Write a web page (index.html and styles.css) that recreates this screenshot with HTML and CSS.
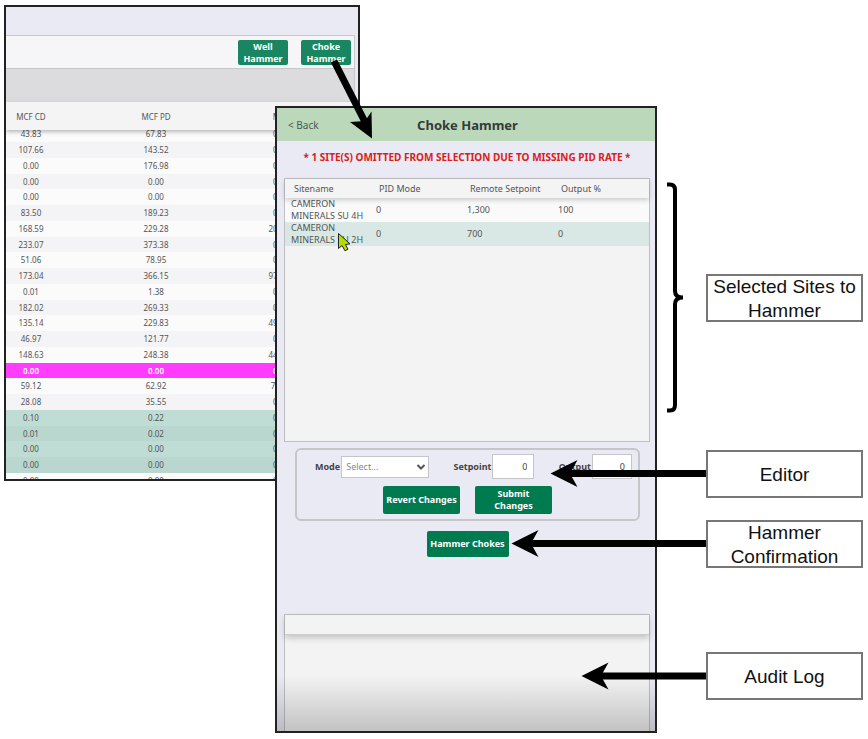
FILE: index.html
```html
<!DOCTYPE html>
<html lang="en">
<head>
<meta charset="utf-8">
<title>Choke Hammer</title>
<link rel="stylesheet" href="styles.css">
</head>
<body>
<main class="canvas">

  <section class="window wells">
    <div class="wells-top"></div>
    <div class="toolbar">
      <button type="button" class="btn btn-tool">Well Hammer</button>
      <button type="button" class="btn btn-tool">Choke Hammer</button>
    </div>
    <div class="band"></div>
    <table class="rates">
      <colgroup><col class="col-cd"><col class="col-pd"><col class="col-next"><col></colgroup>
      <thead><tr><th>MCF CD</th><th>MCF PD</th><th>MCF</th><th></th></tr></thead>
      <tbody>
        <tr><td>43.83</td><td>67.83</td><td>0.00</td><td></td></tr>
        <tr><td>107.66</td><td>143.52</td><td>0.00</td><td></td></tr>
        <tr><td>0.00</td><td>176.98</td><td>0.00</td><td></td></tr>
        <tr><td>0.00</td><td>0.00</td><td>0.00</td><td></td></tr>
        <tr><td>0.00</td><td>0.00</td><td>0.00</td><td></td></tr>
        <tr><td>83.50</td><td>189.23</td><td>0.00</td><td></td></tr>
        <tr><td>168.59</td><td>229.28</td><td>200.00</td><td></td></tr>
        <tr><td>233.07</td><td>373.38</td><td>0.00</td><td></td></tr>
        <tr><td>51.06</td><td>78.95</td><td>0.00</td><td></td></tr>
        <tr><td>173.04</td><td>366.15</td><td>970.00</td><td></td></tr>
        <tr><td>0.01</td><td>1.38</td><td>0.00</td><td></td></tr>
        <tr><td>182.02</td><td>269.33</td><td>0.00</td><td></td></tr>
        <tr><td>135.14</td><td>229.83</td><td>490.00</td><td></td></tr>
        <tr><td>46.97</td><td>121.77</td><td>0.00</td><td></td></tr>
        <tr><td>148.63</td><td>248.38</td><td>440.00</td><td></td></tr>
        <tr class="alarm"><td>0.00</td><td>0.00</td><td>0.00</td><td></td></tr>
        <tr><td>59.12</td><td>62.92</td><td>70.00</td><td></td></tr>
        <tr><td>28.08</td><td>35.55</td><td>0.00</td><td></td></tr>
        <tr class="picked"><td>0.10</td><td>0.22</td><td>0.00</td><td></td></tr>
        <tr class="picked"><td>0.01</td><td>0.02</td><td>0.00</td><td></td></tr>
        <tr class="picked"><td>0.00</td><td>0.00</td><td>0.00</td><td></td></tr>
        <tr class="picked"><td>0.00</td><td>0.00</td><td>0.00</td><td></td></tr>
        <tr><td>0.00</td><td>0.00</td><td>0.00</td><td></td></tr>
      </tbody>
    </table>
  </section>

  <section class="window hammer">
    <header class="titlebar">
      <button type="button" class="back">&lt; Back</button>
      <h1 class="title">Choke Hammer</h1>
    </header>
    <p class="warning">* 1 SITE(S) OMITTED FROM SELECTION DUE TO MISSING PID RATE *</p>

    <div class="panel sites-panel">
      <table class="sites">
        <colgroup><col class="col-site"><col class="col-mid"><col class="col-mid"><col></colgroup>
        <thead><tr><th>Sitename</th><th>PID Mode</th><th>Remote Setpoint</th><th>Output %</th></tr></thead>
        <tbody>
          <tr><td>CAMERON<br>MINERALS SU 4H</td><td>0</td><td>1,300</td><td>100</td></tr>
          <tr class="active"><td>CAMERON<br>MINERALS SU 2H</td><td>0</td><td>700</td><td>0</td></tr>
        </tbody>
      </table>
    </div>

    <form class="editor">
      <div class="fields">
        <div class="field">
          <label for="mode">Mode</label>
          <span class="select-wrap">
            <select id="mode"><option>Select...</option></select>
            <svg class="chevron" viewBox="0 0 10 6" aria-hidden="true"><path d="M1.500 1L5 4.500L8.500 1"/></svg>
          </span>
        </div>
        <div class="field">
          <label for="setpoint">Setpoint</label>
          <input id="setpoint" type="text" value="0">
        </div>
        <div class="field">
          <label for="output">Output</label>
          <input id="output" type="text" value="0">
        </div>
      </div>
      <div class="actions">
        <button type="button" class="btn btn-edit">Revert Changes</button>
        <button type="button" class="btn btn-edit">Submit<br>Changes</button>
      </div>
    </form>

    <button type="button" class="btn btn-hammer">Hammer Chokes</button>

    <div class="panel audit-panel"><div class="audit-head"></div></div>
  </section>

  <div class="callout callout-sites">Selected Sites to Hammer</div>
  <div class="callout callout-editor">Editor</div>
  <div class="callout callout-confirm">Hammer Confirmation</div>
  <div class="callout callout-audit">Audit Log</div>

  <svg class="marks" width="868" height="739" viewBox="0 0 868 739" aria-hidden="true">
    <g class="shaft">
      <path d="M334 61L366 124"/>
      <path d="M706 473.5H566"/>
      <path d="M706 543.5H527"/>
      <path d="M706 676H597"/>
    </g>
    <g class="head">
      <path d="M372 138.500L350 122L365 121L371.500 111.500Z"/>
      <path d="M550.500 473.500L577.500 460L570 473.500L577.500 487Z"/>
      <path d="M511.500 543.500L538.500 530L531 543.500L538.500 557Z"/>
      <path d="M581.500 676L608.500 662.500L601 676L608.500 689.500Z"/>
    </g>
    <path class="brace" d="M667 184.500H670Q675 184.500 675 190V291Q675 297.500 683 297.500Q675 297.500 675 304V405Q675 410.500 670 410.500H667"/>
    <path class="pointer" d="M338.500 233.500V248.500L342 245.500L345 250.800L348 249.200L345.400 244.500L350 243.800Z"/>
  </svg>
</main>
</body>
</html>
```
FILE: styles.css
```css
* { box-sizing: border-box; }

body {
  margin: 0;
  background: #fff;
  color: #555;
  font: 9px/12px "Noto Sans", "Open Sans", sans-serif;
}

button, input, select { font: inherit; color: inherit; margin: 0; }
table { border-collapse: collapse; table-layout: fixed; width: 100%; }
th, td { padding: 0; font-weight: 400; }

/* Free canvas: two overlapping windows with annotations */
.canvas { position: relative; min-height: 739px; overflow: hidden; }

.window {
  position: absolute;
  display: flex;
  flex-direction: column;
  border: 2px solid #222;
  background: #eaeaf4;
  overflow: hidden;
}

.btn {
  border: 0;
  border-radius: 2px;
  padding: 0;
  background: #007a4f;
  color: #fff;
  font-weight: 700;
  text-align: center;
}

/* Well list */
.wells { left: 4px; top: 5px; width: 356px; height: 476px; }
.wells-top { height: 28px; flex: none; }

.toolbar {
  display: flex;
  flex: none;
  justify-content: flex-end;
  gap: 13px;
  height: 34px;
  margin-right: 3px;
  padding: 4px 3px;
  border: 1px solid #c8c8cc;
  border-left: 0;
  background: #f6f6f8;
}
.btn-tool { width: 50px; height: 25px; padding: 0 4px; background: #1a8561; }

.band { flex: none; height: 33px; margin-right: 3px; background: #dcdcde; border-right: 1px solid #c8c8cc; }

.rates { text-align: center; font-size: 8px; background: #fbfbfb; }
.col-cd { width: 50px; }
.col-pd { width: 200px; }
.col-next { width: 50px; }
.rates thead { position: relative; background: #f4f4f5; box-shadow: 0 2px 4px #0004; }
.rates th { height: 28px; padding-top: 2px; }
.rates td { height: 16px; line-height: 12px; }
.rates tbody tr:nth-child(4n) td { height: 15px; }
.rates tbody tr:nth-child(even) { background: #f4f4f6; }
.rates tbody tr:first-child td { height: 12px; line-height: 8px; vertical-align: top; }
.rates tbody tr.alarm { background: #ff3cff; color: #fff; }
.rates .alarm td { font-weight: 600; }
.rates tbody tr.picked { background: #bfddd5; }
.rates tbody tr.picked:nth-child(even) { background: #b9d6cf; }

/* Choke hammer dialog */
.hammer { left: 275px; top: 106px; width: 382px; height: 627px; }
.hammer::after {
  content: "";
  position: absolute;
  inset: auto 0 0;
  height: 56px;
  background: linear-gradient(#0000, #0003);
  pointer-events: none;
}

.titlebar {
  display: grid;
  grid-template-columns: 1fr auto 1fr;
  align-items: center;
  flex: none;
  height: 33px;
  padding: 0 8px 0 11px;
  background: #bcd8ba;
}
.back { justify-self: start; border: 0; padding: 0; background: none; font-size: 10px; color: #4d5a50; }
.title { margin: 0; font-size: 13px; line-height: 16px; font-weight: 700; color: #333c38; }

.warning {
  margin: 8px 0 13px 2px;
  font-size: 10px;
  line-height: 16px;
  font-weight: 700;
  text-align: center;
  color: #d8201c;
}

.panel { flex: none; margin: 0 5px 0 7px; border: 1px solid #c0c0c2; background: #f3f3f3; }
.sites-panel { height: 264px; }
.sites { text-align: left; }
.col-site { width: 85px; }
.col-mid { width: 91px; }
.sites thead { position: relative; background: #f4f4f4; box-shadow: 0 2px 5px #0003; }
.sites th { height: 19px; padding-left: 9px; }
.sites td { height: 24px; padding-left: 6px; white-space: nowrap; }
.sites tbody tr { background: #fafafa; }
.sites tbody .active { background: #d9e8e4; }

.editor {
  flex: none;
  margin: 6px 15px 0 18px;
  padding: 4px 6px 5px 18px;
  border: 2px solid #c6c6ca;
  border-radius: 6px;
}
.fields { display: flex; justify-content: space-between; align-items: center; }
.field { display: flex; align-items: center; gap: 1px; font-weight: 700; color: #444; }
.field input {
  width: 42px;
  height: 25px;
  padding: 0 6px;
  border: 1px solid #c6c6ca;
  background: #fff;
  font-weight: 400;
  text-align: right;
}
.select-wrap { display: grid; align-items: center; }
.select-wrap select {
  grid-area: 1 / 1;
  width: 88px;
  height: 22px;
  padding: 0 4px;
  border: 1px solid #c6c6ca;
  border-radius: 0;
  appearance: none;
  background: #fff;
  font-weight: 400;
  color: #888;
}
.chevron {
  grid-area: 1 / 1;
  justify-self: end;
  width: 10px;
  height: 6px;
  margin-right: 3px;
  fill: none;
  stroke: #555;
  stroke-width: 2;
  pointer-events: none;
}
.field #output { width: 40px; }
.actions { display: flex; justify-content: center; gap: 15px; padding: 7px 12px 0 0; }
.btn-edit { width: 77px; height: 28px; }
.btn-hammer { flex: none; align-self: center; width: 82px; height: 26px; margin: 10px 0 0 3px; }

.audit-panel { flex: 1; margin-top: 57px; border-bottom: 0; }
.audit-head { height: 20px; border-bottom: 1px solid #ccc; box-shadow: 0 3px 6px #0003; }

/* Annotations */
.callout {
  position: absolute;
  left: 706px;
  display: flex;
  align-items: center;
  justify-content: center;
  width: 157px;
  height: 48px;
  padding-top: 2px;
  border: 2px solid #777;
  background: #fff;
  color: #111;
  font: 19px/24px "Liberation Sans", Arial, sans-serif;
  text-align: center;
}
.callout-sites { top: 274px; }
.callout-editor { top: 450px; }
.callout-confirm { top: 520px; }
.callout-audit { top: 652px; }

.marks { position: absolute; left: 0; top: 0; pointer-events: none; }
.shaft { stroke: #000; stroke-width: 7; }
.brace { fill: none; stroke: #000; stroke-width: 4; }
.pointer { fill: #b8dc00; stroke: #222; stroke-width: 1; }
```
